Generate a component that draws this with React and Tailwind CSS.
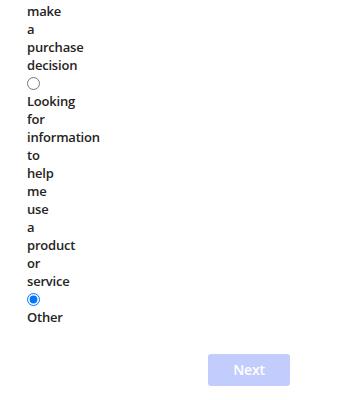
export default function App() {
  const before = ["make", "a", "purchase", "decision"];
  const options = [
    { id: "info", words: ["Looking", "for", "information", "to", "help", "me", "use", "a", "product", "or", "service"], checked: false },
    { id: "other", words: ["Other"], checked: true },
  ];

  return (
    <div className="bg-white min-h-[400px] pt-[2px] text-[#252423] text-[13px] leading-[18px] font-semibold tracking-[-0.2px]" style={{ fontFamily: '"Open Sans", "Noto Sans", sans-serif' }}>
      <div className="pl-[27px]">
        {before.map((w, i) => (
          <div key={i}>{w}</div>
        ))}
        {options.map(opt => (
          <label key={opt.id} className="block">
            <div className="flex items-center h-[18px]">
              <input type="radio" name="reason" defaultChecked={opt.checked} className="w-[13px] h-[13px]" />
            </div>
            {opt.words.map((w, i) => (
              <div key={i}>{w}</div>
            ))}
          </label>
        ))}
      </div>
      <div className="pl-[208px] mt-[28px]">
        <button className="w-[82px] h-[32px] rounded-[3px] bg-[#c2cdfd] text-white text-[14px] font-semibold">Next</button>
      </div>
    </div>
  );
}
